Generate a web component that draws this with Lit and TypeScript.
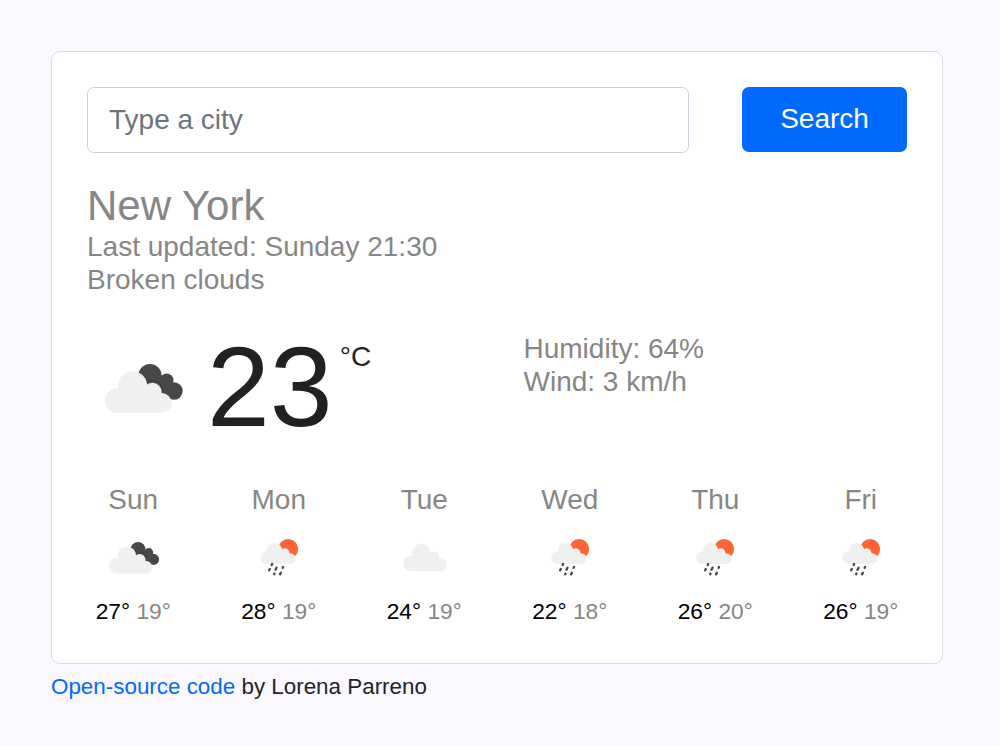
import { LitElement, html, css, svg } from "lit";
import { customElement, property } from "lit/decorators.js";

type Sky = "broken" | "rain" | "cloud";

// Cloud silhouettes share one 198x150 canvas, the small forecast icon at triple size.
const brokenClouds = svg`
  <g fill="#48484a">
    <circle cx="150" cy="62" r="35"/><circle cx="200" cy="76" r="20.5"/><circle cx="222" cy="108" r="26"/>
    <path d="M150 62L200 76L222 108L200 125L150 97Z"/>
  </g>
  <g fill="#f0f0ee" stroke="#2f2f31" stroke-width="2">
    <path d="M131 63A44 44 0 0 1 141 83A28 28 0 0 1 185 115A30 30 0 0 1 208 127" fill="none"/>
  </g>
  <g fill="#f0f0ee">
    <circle cx="52" cy="137" r="37"/><circle cx="98" cy="92" r="43.5"/>
    <circle cx="157" cy="111" r="28"/><circle cx="185" cy="144" r="30"/>
    <path d="M52 174V137L98 92L157 100L185 130V174Z"/>
  </g>`;

const rain = svg`
  <circle cx="114" cy="57" r="30" fill="#ff6434"/>
  <path d="M91 51Q94 56 95 60Q101 54 107 55Q118 57 119 70Q129 72 134 79" fill="none" stroke="#e9441c" stroke-width="1.6"/>
  <g fill="#f0f0f0">
    <circle cx="49" cy="83" r="19"/><circle cx="73" cy="62" r="23"/>
    <circle cx="104" cy="69" r="14"/><circle cx="120" cy="86" r="16.5"/>
    <path d="M49 102V83L73 62L104 66L120 86V102Z"/>
  </g>
  <g stroke="#48484a" stroke-width="7" stroke-linecap="round">
    <path d="M66 102L64.500 105M59 117L57 121M79 113L76 119M73 130.500L72 132.500M98.500 111L97.500 113.500M92 128.500L89.500 133"/>
  </g>`;

const cloud = svg`
  <g fill="#f0f0ee">
    <circle cx="47" cy="101" r="23"/><circle cx="79" cy="69" r="27.500"/>
    <circle cx="117" cy="81" r="16"/><circle cx="136" cy="105" r="19"/>
    <path d="M47 124V101L79 69L117 75L136 105V124Z"/>
  </g>`;

@customElement("weather-icon")
class WeatherIcon extends LitElement {
  @property() sky: Sky = "cloud";
  @property({ type: Boolean }) large = false;

  static styles = css`
    :host { display: block; flex: none; }
    svg { display: block; width: 100%; height: 100%; }
  `;

  render() {
    if (this.large) {
      return html`<svg viewBox="0 0 270 195">${brokenClouds}</svg>`;
    }
    const art =
      this.sky === "broken"
        ? svg`<g transform="translate(17.300 18.500) scale(.645)">${brokenClouds}</g>`
        : this.sky === "rain"
          ? svg`<g transform="translate(12.500 0)">${rain}</g>`
          : svg`<g transform="translate(12 0)">${cloud}</g>`;
    return html`<svg viewBox="0 0 198 150">${art}</svg>`;
  }
}

@customElement("app-root")
class AppRoot extends LitElement {
  private days: { day: string; sky: Sky; max: number; min: number }[] = [
    { day: "Sun", sky: "broken", max: 27, min: 19 },
    { day: "Mon", sky: "rain", max: 28, min: 19 },
    { day: "Tue", sky: "cloud", max: 24, min: 19 },
    { day: "Wed", sky: "rain", max: 22, min: 18 },
    { day: "Thu", sky: "rain", max: 26, min: 20 },
    { day: "Fri", sky: "rain", max: 26, min: 19 },
  ];

  static styles = css`
    :host {
      display: block;
      box-sizing: border-box;
      min-height: 746px;
      padding: 51px 57px 0 51px;
      background: #faf7ff;
      color: #212529;
      font: 28px/33px "Liberation Sans", Arial, sans-serif;
    }
    .card {
      box-sizing: border-box;
      height: 613px;
      padding: 35px;
      border: 1px solid #dcdce4;
      border-radius: 9px;
      background: #fff;
    }
    .search { display: flex; justify-content: space-between; align-items: flex-start; }
    .field {
      box-sizing: border-box;
      width: 602px;
      height: 66px;
      padding: 0 21px;
      border: 1px solid #cbd1dd;
      border-radius: 7px;
      background: #fff;
      font: inherit;
      outline: none;
    }
    .field::placeholder { color: #6c757d; opacity: 1; }
    .submit {
      width: 165px;
      height: 65px;
      padding: 0 0 2px;
      border: 0;
      border-radius: 7px;
      background: #006aff;
      color: #fff;
      font: inherit;
    }
    .city { margin: 28px 0 0; font-size: 42px; line-height: 49px; font-weight: 400; color: #868686; }
    .facts { margin: 0; padding: 0; list-style: none; color: #868686; }
    .now { display: grid; grid-template-columns: 436.500px 1fr; margin-top: 36px; height: 120px; }
    .temperature { display: flex; align-items: flex-start; }
    .temperature weather-icon { width: 90px; height: 65px; margin: 23px 0 0 13px; }
    .degrees { margin-left: 17px; font-size: 113px; line-height: 110px; color: #212121; }
    .unit { margin: 8px 0 0 7px; }
    .forecast { display: grid; grid-template-columns: repeat(6, 145.500px); margin: 31px -27px 0 -26.500px; }
    .day { display: flex; flex-direction: column; align-items: center; }
    .name { color: #868686; }
    .day weather-icon { width: 66px; height: 50px; margin: 14px 0 15px; }
    .range { font-size: 22.750px; line-height: 32px; color: #868686; }
    .max { color: #000; }
    .credit { font-size: 22.400px; line-height: 34px; margin-top: 6px; }
    .link { color: #006aff; text-decoration: none; }
  `;

  render() {
    return html`
      <main class="card">
        <form class="search">
          <input class="field" type="text" placeholder="Type a city" />
          <button class="submit" type="button">Search</button>
        </form>
        <h1 class="city">New York</h1>
        <ul class="facts">
          <li>Last updated: Sunday 21:30</li>
          <li>Broken clouds</li>
        </ul>
        <section class="now">
          <div class="temperature">
            <weather-icon large></weather-icon>
            <span class="degrees">23</span>
            <span class="unit">°C</span>
          </div>
          <ul class="facts">
            <li>Humidity: 64%</li>
            <li>Wind: 3 km/h</li>
          </ul>
        </section>
        <section class="forecast">
          ${this.days.map(
            (d) => html`<div class="day">
              <span class="name">${d.day}</span>
              <weather-icon .sky=${d.sky}></weather-icon>
              <span class="range"><span class="max">${d.max}°</span> ${d.min}°</span>
            </div>`
          )}
        </section>
      </main>
      <footer class="credit"><a class="link" href="#">Open-source code</a> by Lorena Parreno</footer>
    `;
  }
}
